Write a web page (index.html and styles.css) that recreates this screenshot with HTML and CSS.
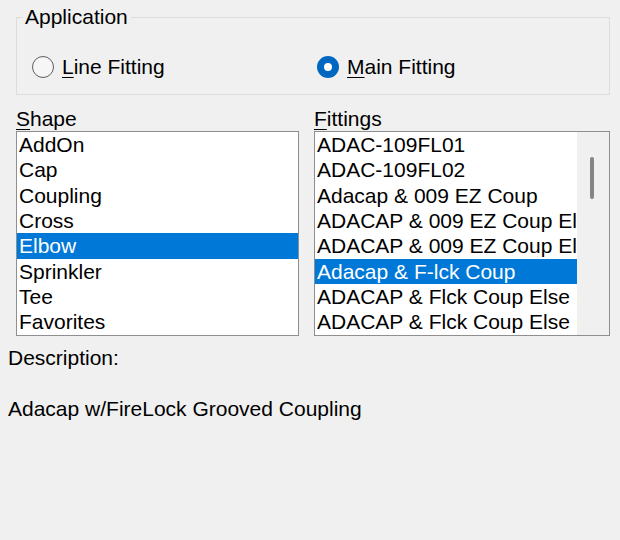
FILE: index.html
```html
<!DOCTYPE html>
<html>
<head>
<meta charset="utf-8">
<link rel="stylesheet" href="styles.css">
</head>
<body>
<fieldset class="group">
  <legend class="group-title">Application</legend>
  <div class="radio-row">
    <label class="radio radio-first"><span class="dot"></span><span><u>L</u>ine Fitting</span></label>
    <label class="radio"><span class="dot checked"></span><span><u>M</u>ain Fitting</span></label>
  </div>
</fieldset>
<div class="lists">
  <div class="col">
    <div class="lbl"><u>S</u>hape</div>
    <div class="listbox">
      <div class="items">
        <div class="item">AddOn</div>
        <div class="item">Cap</div>
        <div class="item">Coupling</div>
        <div class="item">Cross</div>
        <div class="item sel">Elbow</div>
        <div class="item">Sprinkler</div>
        <div class="item">Tee</div>
        <div class="item">Favorites</div>
      </div>
    </div>
  </div>
  <div class="col">
    <div class="lbl"><u>F</u>ittings</div>
    <div class="listbox">
      <div class="items">
        <div class="item">ADAC-109FL01</div>
        <div class="item">ADAC-109FL02</div>
        <div class="item">Adacap &amp; 009 EZ Coup</div>
        <div class="item">ADACAP &amp; 009 EZ Coup Else</div>
        <div class="item">ADACAP &amp; 009 EZ Coup Else</div>
        <div class="item sel">Adacap &amp; F-lck Coup</div>
        <div class="item">ADACAP &amp; Flck Coup Else Elb</div>
        <div class="item">ADACAP &amp; Flck Coup Else Elb</div>
      </div>
      <div class="scrollbar"><div class="thumb"></div></div>
    </div>
  </div>
</div>
<div class="desc-label">Description:</div>
<div class="desc-text">Adacap w/FireLock Grooved Coupling</div>
</body>
</html>
```
FILE: styles.css
```css
html, body {
  margin: 0;
  padding: 0;
  background: #f0f0f0;
}
body {
  font-family: "Liberation Sans", Arial, sans-serif;
  font-size: 21px;
  line-height: 24px;
  color: #000;
  width: 620px;
  height: 540px;
  overflow: hidden;
}
u {
  text-decoration-thickness: 1px;
  text-underline-offset: 3px;
}
.group {
  box-sizing: border-box;
  margin: 5px 0 0 16px;
  width: 594px;
  height: 90px;
  border: 1px solid #dcdcdc;
  padding: 0 0 0 5px;
  min-width: 0;
}
.group-title {
  padding: 0 3px;
  line-height: 24px;
}
.radio-row {
  display: flex;
  align-items: center;
  margin: 26px 0 0 10px;
}
.radio {
  display: flex;
  align-items: center;
  gap: 8px;
}
.radio-first {
  width: 285px;
}
.dot {
  box-sizing: border-box;
  width: 22px;
  height: 22px;
  border-radius: 50%;
  border: 1.5px solid #5e5e5e;
  background: #f6f6f6;
  flex: none;
}
.dot.checked {
  border: 7px solid #0067c0;
  background: #fff;
}
.lists {
  display: grid;
  grid-template-columns: 283px 296px;
  column-gap: 15px;
  margin: 12px 0 0 16px;
}
.lbl {
  line-height: 24px;
}
.listbox {
  box-sizing: border-box;
  height: 205px;
  border: 1px solid #8f8f8f;
  background: #fff;
  display: flex;
  overflow: hidden;
}
.items {
  flex: 1;
  min-width: 0;
  overflow: hidden;
}
.item {
  height: 25.33px;
  line-height: 25.33px;
  padding-left: 2px;
  white-space: nowrap;
  overflow: hidden;
}
.item.sel {
  background: #0078d7;
  color: #fff;
}
.scrollbar {
  width: 32px;
  flex: none;
  background: #f0f0f0;
  position: relative;
}
.thumb {
  position: absolute;
  left: 13px;
  top: 25px;
  width: 4px;
  height: 42px;
  border-radius: 2px;
  background: #858585;
}
.desc-label {
  margin: 10px 0 0 8px;
}
.desc-text {
  margin: 27px 0 0 8px;
}
```
